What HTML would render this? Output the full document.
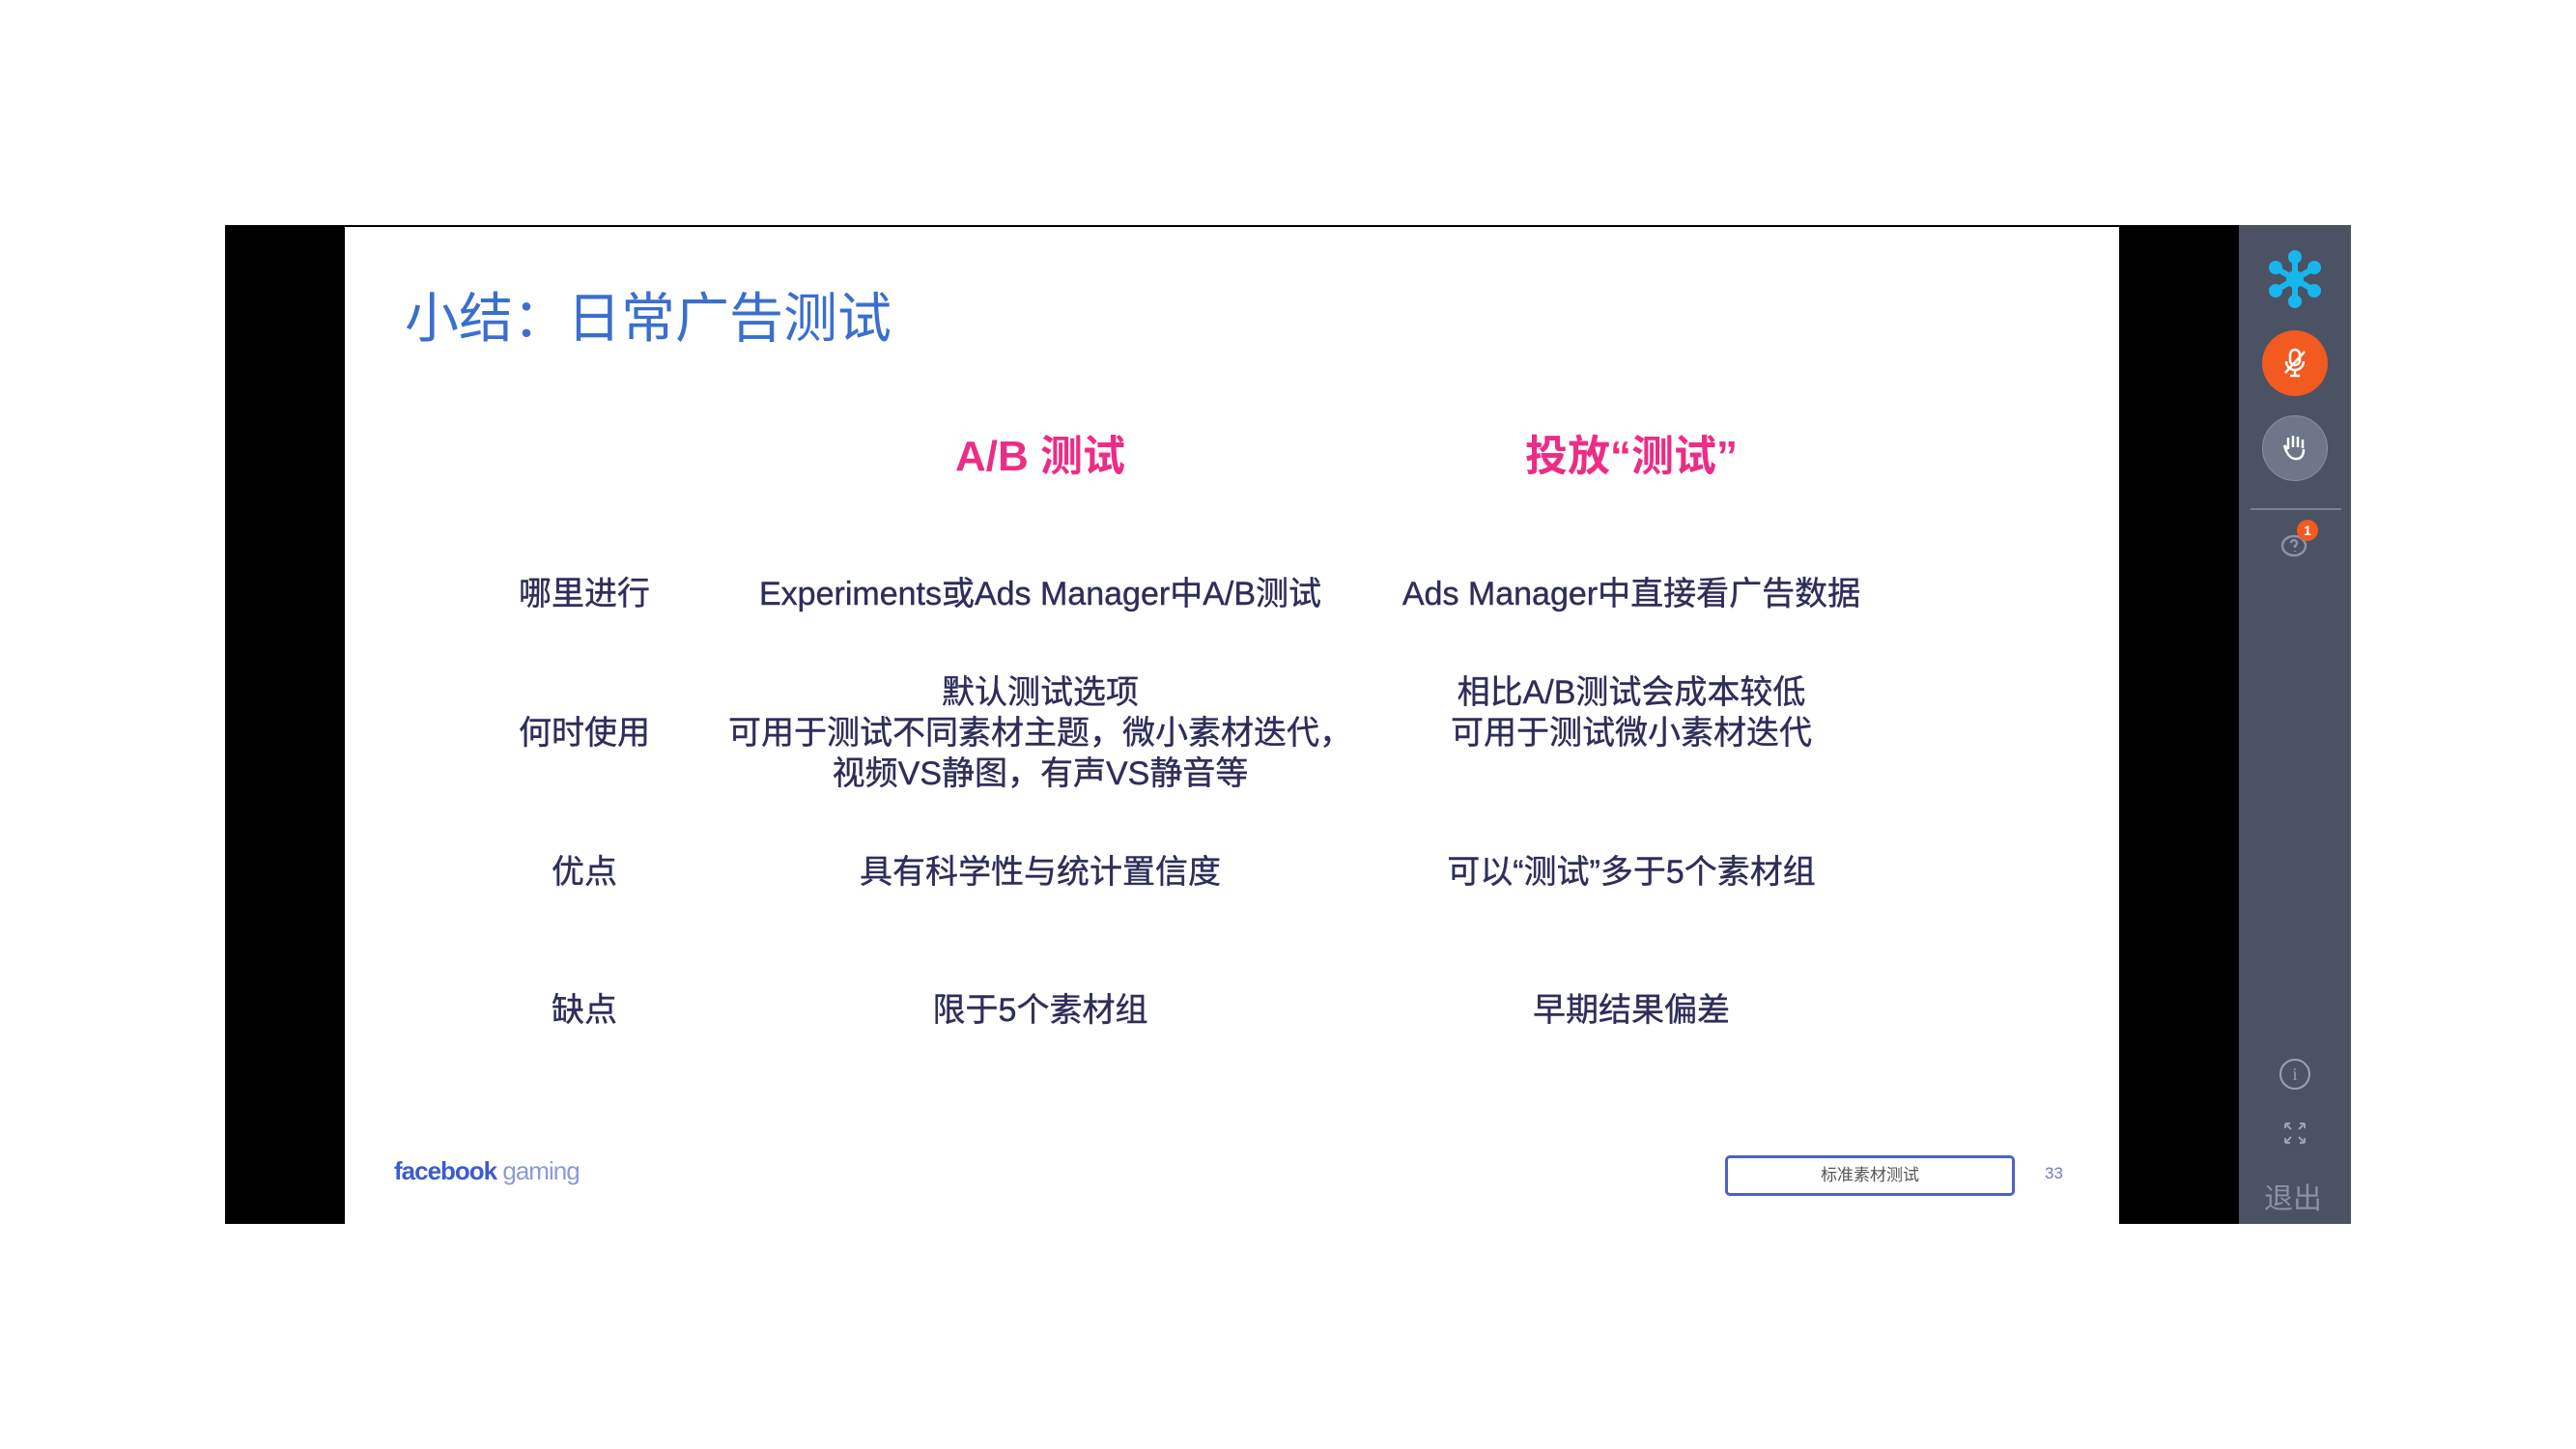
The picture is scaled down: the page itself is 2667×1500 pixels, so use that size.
<!DOCTYPE html>
<html><head><meta charset="utf-8"><style>
body{margin:0;width:2667px;height:1500px;background:#fff;position:relative;overflow:hidden;font-family:"Liberation Sans","Noto Sans CJK SC",sans-serif}
.a{position:absolute}
.c{position:absolute;text-align:center;transform:translateX(-50%);white-space:nowrap;color:#2e2e5a;font-size:34px;line-height:42px;-webkit-text-stroke:0.4px #2e2e5a}
.h{position:absolute;transform:translateX(-50%);white-space:nowrap;color:#ec2d85;font-weight:bold;font-size:44px}
</style></head><body>
<div class="a" style="left:233px;top:233px;width:2201px;height:1034px;background:#000"></div>
<div class="a" style="left:357px;top:235px;width:1837px;height:1032px;background:#fff"></div>
<div class="a" style="left:2318px;top:233px;width:116px;height:1034px;background:#4a5264"></div>
<div class="a" style="left:419px;top:285px;font-size:56px;color:#3a6fd0">小结：日常广告测试</div>
<div class="h" style="left:1077px;top:436px">A/B 测试</div>
<div class="h" style="left:1689px;top:436px">投放“测试”</div>
<div class="c" style="left:605px;top:594px">哪里进行</div>
<div class="c" style="left:1077px;top:594px">Experiments或Ads Manager中A/B测试</div>
<div class="c" style="left:1689px;top:594px">Ads Manager中直接看广告数据</div>
<div class="c" style="left:605px;top:738px">何时使用</div>
<div class="c" style="left:1077px;top:696px">默认测试选项<br>可用于测试不同素材主题，微小素材迭代，<br>视频VS静图，有声VS静音等</div>
<div class="c" style="left:1689px;top:696px">相比A/B测试会成本较低<br>可用于测试微小素材迭代</div>
<div class="c" style="left:605px;top:882px">优点</div>
<div class="c" style="left:1077px;top:882px">具有科学性与统计置信度</div>
<div class="c" style="left:1689px;top:882px">可以“测试”多于5个素材组</div>
<div class="c" style="left:605px;top:1025px">缺点</div>
<div class="c" style="left:1077px;top:1025px">限于5个素材组</div>
<div class="c" style="left:1689px;top:1025px">早期结果偏差</div>
<div class="a" style="left:408px;top:1197px;font-size:26px;color:#3b5bd0;letter-spacing:-1px"><b>facebook</b> <span style="color:#8a9ad8">gaming</span></div>
<div class="a" style="left:1786px;top:1196px;width:294px;height:36px;border:3px solid #4a62c8;border-radius:5px;font-size:17px;color:#555;text-align:center;line-height:36px">标准素材测试</div>
<div class="a" style="left:2117px;top:1205px;font-size:17px;color:#6a7ad0">33</div>
<svg class="a" style="left:2346px;top:259px" width="60" height="60" viewBox="0 0 60 60"><g stroke="#17b7ee" stroke-width="6" fill="#17b7ee"><line x1="30" y1="8" x2="30" y2="52"/><line x1="11" y1="19" x2="49" y2="41"/><line x1="11" y1="41" x2="49" y2="19"/><circle cx="30" cy="30" r="6"/><circle cx="30" cy="7" r="4"/><circle cx="30" cy="53" r="4"/><circle cx="10" cy="18" r="4"/><circle cx="50" cy="42" r="4"/><circle cx="10" cy="42" r="4"/><circle cx="50" cy="18" r="4"/></g></svg>
<div class="a" style="left:2342px;top:342px;width:68px;height:68px;border-radius:50%;background:#f25a1f"></div>
<svg class="a" style="left:2362px;top:360px" width="28" height="32" viewBox="0 0 28 32" fill="none" stroke="#fff" stroke-width="2.5"><rect x="9" y="2" width="10" height="16" rx="5"/><path d="M5 14a9 9 0 0 0 18 0M14 23v6M9 29h10M4 26L24 4"/></svg>
<div class="a" style="left:2342px;top:430px;width:66px;height:66px;border-radius:50%;background:#6e7687;border:1px solid #8a91a0"></div>
<svg class="a" style="left:2361px;top:447px" width="30" height="32" viewBox="0 0 30 32" fill="none" stroke="#fff" stroke-width="2.5"><path d="M8 18V6M13 16V4M18 16V5M23 17V8M8 18l-4-4M4 14c2 8 6 14 12 14 6 0 8-4 8-10"/></svg>
<div class="a" style="left:2330px;top:526px;width:94px;height:2px;background:#7a8292"></div>
<svg class="a" style="left:2360px;top:550px" width="34" height="30" viewBox="0 0 34 30" fill="none" stroke="#8a94a8" stroke-width="2.5"><ellipse cx="15" cy="15" rx="12" ry="10"/><path d="M12 12a3 3 0 1 1 4 3v2M16 20v1"/></svg>
<div class="a" style="left:2378px;top:538px;width:22px;height:22px;border-radius:50%;background:#f25a1f;color:#fff;font-size:14px;font-weight:bold;text-align:center;line-height:22px">1</div>
<div class="a" style="left:2360px;top:1096px;width:28px;height:28px;border-radius:50%;border:2px solid #9aa2b2;color:#9aa2b2;font-size:18px;text-align:center;line-height:28px;font-family:'Liberation Serif',serif">i</div>
<svg class="a" style="left:2364px;top:1161px" width="24" height="24" viewBox="0 0 24 24" fill="none" stroke="#9aa2b2" stroke-width="2"><path d="M2 2l6 6M2 2v5M2 2h5M22 2l-6 6M22 2v5M22 2h-5M2 22l6-6M2 22v-5M2 22h5M22 22l-6-6M22 22v-5M22 22h-5"/></svg>
<div class="a" style="left:2344px;top:1216px;font-size:30px;color:#8a92a4">退出</div>
</body></html>
